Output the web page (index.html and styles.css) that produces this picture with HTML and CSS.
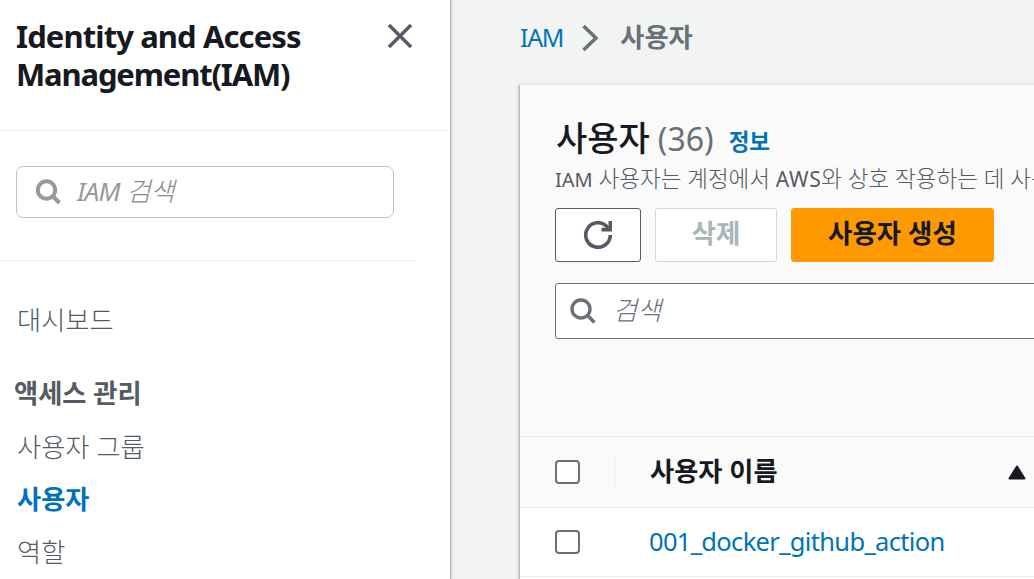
FILE: index.html
```html
<!DOCTYPE html>
<html lang="ko">
<head>
    <meta charset="UTF-8">
    <meta name="viewport" content="width=device-width, initial-scale=1.0">
    <title>사용자 | IAM</title>
    <link rel="stylesheet" href="styles.css">
</head>
<body>
    <div class="layout">
        <nav class="sidebar">
            <div class="sidebar-header">
                <h2 class="sidebar-title">Identity and Access<br><span class="title-second">Management(IAM)</span></h2>
                <svg class="icon-close" viewBox="0 0 26 26" width="26" height="26">
                    <path d="M2 2l22 22M24 2L2 24" fill="none" stroke="#545b64" stroke-width="3.4"/>
                </svg>
            </div>
            <div class="sidebar-search">
                <div class="search-box">
                    <svg viewBox="0 0 26 26" width="26" height="26">
                        <circle cx="10.5" cy="11" r="8.7" fill="none" stroke="#999" stroke-width="4"/>
                        <path d="M16.5 17l7 7" fill="none" stroke="#999" stroke-width="4"/>
                    </svg>
                    <span class="placeholder"><span class="placeholder-latin">IAM</span> 검색</span>
                </div>
            </div>
            <ul class="nav-list">
                <li class="nav-item dashboard">대시보드</li>
                <li class="nav-item section">액세스 관리</li>
                <li class="nav-item">사용자 그룹</li>
                <li class="nav-item active">사용자</li>
                <li class="nav-item">역할</li>
            </ul>
        </nav>

        <main class="content">
            <div class="breadcrumb">
                <a class="crumb-link">IAM</a>
                <svg viewBox="0 0 16 28" width="16" height="28">
                    <path d="M1.5 2L14 14 1.5 26" fill="none" stroke="#687078" stroke-width="3.6"/>
                </svg>
                <span class="crumb-current">사용자</span>
            </div>

            <section class="panel">
                <div class="panel-header">
                    <div class="heading">
                        <h1>사용자</h1>
                        <span class="counter">(36)</span>
                        <a class="info">정보</a>
                    </div>
                    <p class="description"><span class="latin">IAM</span> 사용자는 계정에서 <span class="latin latin-wide">AWS</span>와 상호 작용하는 데 사용되는 자격 증명입니다.</p>
                    <div class="actions">
                        <button class="btn btn-refresh">
                            <svg viewBox="0 0 28 28" width="28" height="28">
                                <path d="M26.3 14A12.3 12.3 0 1 1 23 5.6L25 8.5" fill="none" stroke="#545b64" stroke-width="3.6"/>
                                <path d="M26.3 0V8.6H17.5" fill="none" stroke="#545b64" stroke-width="3.6"/>
                            </svg>
                        </button>
                        <button class="btn btn-delete" disabled>삭제</button>
                        <button class="btn btn-primary">사용자 생성</button>
                    </div>
                    <div class="filter">
                        <svg viewBox="0 0 26 26" width="26" height="26">
                            <circle cx="11" cy="11" r="9" fill="none" stroke="#687078" stroke-width="3.4"/>
                            <path d="M17.3 17.3l7.2 7.2" fill="none" stroke="#687078" stroke-width="3.4"/>
                        </svg>
                        <span class="placeholder">검색</span>
                    </div>
                </div>

                <div class="row row-head">
                    <div class="cell-check"><span class="checkbox"></span></div>
                    <div class="cell-name">사용자 이름</div>
                    <svg class="icon-sort" viewBox="0 0 18 15" width="18" height="15">
                        <path d="M9 1.5L16.5 13.5H1.5z" fill="#16191f" stroke="#16191f" stroke-width="2" stroke-linejoin="round"/>
                    </svg>
                </div>
                <div class="row">
                    <div class="cell-check"><span class="checkbox"></span></div>
                    <div class="cell-name"><a class="user-link">001_docker_github_action</a></div>
                </div>
            </section>
        </main>
    </div>
</body>
</html>
```
FILE: styles.css
```css
* {
    box-sizing: border-box;
}

body {
    margin: 0;
    font-family: 'Noto Sans', 'Noto Sans CJK KR', sans-serif;
    font-size: 26.25px;
    color: #545b64;
    background: #f2f3f3;
    overflow: hidden;
}

h1, h2, p, ul {
    margin: 0;
    padding: 0;
}

svg {
    display: block;
    flex: none;
}

.layout {
    display: flex;
    height: 579px;
    overflow: hidden;
}

/* Sidebar */
.sidebar {
    flex: none;
    width: 450px;
    background: #fff;
    box-shadow: 1px 0 1px #b5bbbc, 2px 0 3px rgba(0,28,36,0.15);
}

.sidebar-header {
    display: flex;
    justify-content: space-between;
    align-items: flex-start;
    height: 131px;
    padding: 17px 37px 0 16px;
    border-bottom: 1px solid #eaeded;
}

.sidebar-title {
    font-size: 31px;
    line-height: 38px;
    font-weight: 700;
    color: #16191f;
    white-space: nowrap;
    letter-spacing: -0.9px;
}

.title-second {
    letter-spacing: -1.15px;
}

.icon-close {
    margin-top: 6px;
}

.sidebar-search {
    width: 415px;
    height: 130px;
    padding: 35px 21px 0 16px;
    border-bottom: 1px solid #eaeded;
}

.search-box {
    display: flex;
    align-items: center;
    height: 52px;
    padding-left: 19px;
    border: 1px solid #c4c4c4;
    border-radius: 7px;
}

.placeholder {
    font-style: italic;
    font-weight: 300;
    line-height: 40px;
}

.search-box .placeholder {
    margin: -3px 0 0 15px;
    color: #888;
}

.placeholder-latin {
    font-weight: 400;
    letter-spacing: -0.9px;
    color: #999;
}

.nav-list {
    list-style: none;
    padding: 39px 0 0 17px;
    font-weight: 300;
}

.nav-item {
    height: 53px;
    line-height: 40px;
    white-space: nowrap;
}

.nav-item.dashboard {
    height: 73px;
}

.nav-item.section {
    height: 54px;
    margin-left: -3px;
    font-weight: 700;
}

.nav-item.active {
    height: 52px;
    margin-top: -1px;
    margin-bottom: 1px;
    color: #0073bb;
    font-weight: 700;
}

/* Main content */
.content {
    flex: 1;
    min-width: 0;
    padding-left: 70px;
}

.breadcrumb {
    display: flex;
    align-items: center;
    height: 84px;
    padding-bottom: 8px;
}

.breadcrumb svg {
    margin: 0 22px 0 19px;
}

.crumb-link {
    margin-top: -2px;
    font-size: 25px;
    letter-spacing: -1.3px;
    color: #0073bb;
}

.crumb-current {
    margin-top: -4px;
    color: #687078;
    font-weight: 700;
}

.panel {
    width: 900px;
    height: 520px;
    background: #fff;
    border-top: 1px solid #eaeded;
    box-shadow: -1px 1px 1px #b5bbbc, -2px 1px 3px rgba(0,28,36,0.15);
}

.panel-header {
    height: 352px;
    padding: 31px 0 0 36px;
    background: #fafafa;
    border-bottom: 1px solid #eaeded;
}

.heading {
    display: flex;
    align-items: baseline;
    height: 45px;
    line-height: 44px;
}

.heading h1 {
    font-size: 34px;
    font-weight: 500;
    color: #16191f;
}

.counter {
    margin-left: 8px;
    font-size: 32px;
    color: #687078;
}

.info {
    position: relative;
    top: -1px;
    margin-left: 15px;
    font-size: 22.5px;
    font-weight: 700;
    color: #0073bb;
}

.description {
    height: 47px;
    margin-left: -1px;
    font-size: 22.5px;
    font-weight: 300;
    line-height: 36px;
    white-space: nowrap;
}

.latin {
    font-weight: 400;
    font-size: 20px;
}

.latin-wide {
    font-size: 21px;
    letter-spacing: 0.6px;
}

.actions {
    display: flex;
    gap: 14px;
    margin-left: -1px;
}

.btn {
    display: flex;
    align-items: center;
    justify-content: center;
    height: 54px;
    padding: 0 0 4px;
    background: #fff;
    border: 1px solid #545b64;
    border-radius: 3px;
    font-family: inherit;
    font-size: 26.5px;
    font-weight: 700;
    line-height: 40px;
}

.btn-refresh {
    width: 86px;
    padding: 0;
}

.btn-delete {
    width: 122px;
    color: #aab7b8;
    border-color: #d5dbdb;
}

.btn-primary {
    width: 203px;
    color: #16191f;
    background: #ff9900;
    border-color: #ff9900;
}

.filter {
    display: flex;
    align-items: center;
    height: 56px;
    margin: 21px 0 0 -1px;
    padding-left: 14px;
    background: #fff;
    border: 1px solid #687078;
    border-radius: 3px;
}

.filter .placeholder {
    margin: -3px 0 0 17px;
    color: #687078;
}

/* Users table */
.row {
    display: flex;
    align-items: center;
    height: 69px;
    padding-left: 35px;
    border-bottom: 1px solid #eaeded;
}

.row-head {
    height: 71px;
    background: #fafafa;
    color: #16191f;
    font-weight: 700;
}

.cell-check {
    display: flex;
    align-items: center;
    width: 60px;
    height: 38px;
    border-right: 1px solid transparent;
}

.row-head .cell-check {
    border-right-color: #eaeded;
}

.checkbox {
    width: 25px;
    height: 24px;
    background: #fff;
    border: 2px solid #687078;
    border-radius: 4px;
}

.cell-name {
    width: 393px;
    padding: 0 0 3px 35px;
    line-height: 40px;
    white-space: nowrap;
}

.user-link {
    margin-left: -1px;
    font-size: 25.5px;
    letter-spacing: -0.68px;
    color: #0073bb;
}
```
